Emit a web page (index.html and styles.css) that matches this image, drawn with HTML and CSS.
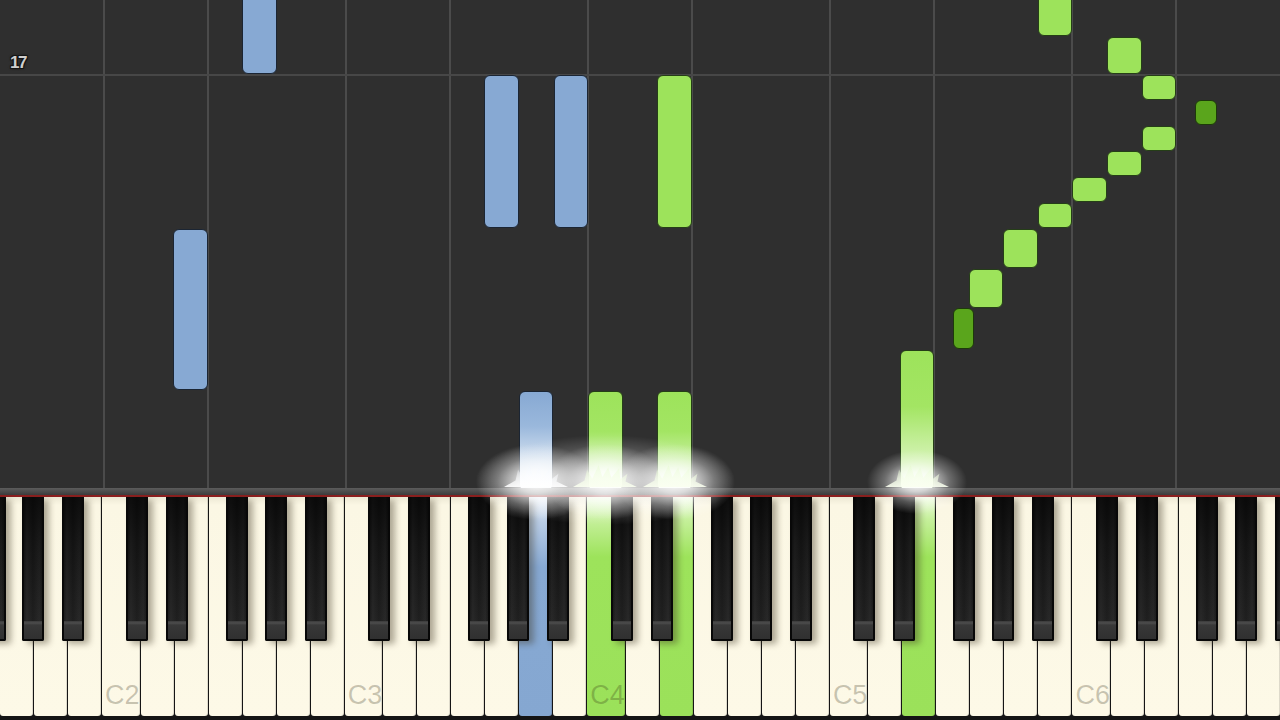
FILE: index.html
```html
<!DOCTYPE html>
<html>
<head>
<meta charset="utf-8">
<title>Piano roll</title>
<link rel="stylesheet" href="styles.css">
</head>
<body>
<div class="app">
  <div class="roll">
    <div class="vline" style="left:102.8px"></div>
    <div class="vline" style="left:206.6px"></div>
    <div class="vline" style="left:345px"></div>
    <div class="vline" style="left:448.7px"></div>
    <div class="vline" style="left:587.1px"></div>
    <div class="vline" style="left:690.9px"></div>
    <div class="vline" style="left:829.3px"></div>
    <div class="vline" style="left:933px"></div>
    <div class="vline" style="left:1071.4px"></div>
    <div class="vline" style="left:1175.2px"></div>
    <div class="measure"></div>
    <span class="measure-num">17</span>

    <div class="note lh" style="left:242.2px;top:-10px;height:83.5px"></div>
    <div class="note lh" style="left:173px;top:229px;height:161px"></div>
    <div class="note lh" style="left:484.3px;top:75px;height:153px"></div>
    <div class="note lh" style="left:553.5px;top:75px;height:153px"></div>
    <div class="note rh" style="left:657.3px;top:75px;height:153px"></div>

    <div class="note lh on" style="left:518.9px;top:391px;height:100px"></div>
    <div class="note rh on" style="left:588.1px;top:391px;height:100px"></div>
    <div class="note rh on" style="left:657.3px;top:391px;height:100px"></div>
    <div class="note rh on" style="left:899.5px;top:350px;height:141px"></div>

    <div class="note rh blk" style="left:952.7px;top:308px;height:41px"></div>
    <div class="note rh" style="left:968.6px;top:269px;height:39px"></div>
    <div class="note rh" style="left:1003.2px;top:229px;height:39px"></div>
    <div class="note rh" style="left:1037.8px;top:203px;height:25px"></div>
    <div class="note rh" style="left:1072.4px;top:177px;height:25px"></div>
    <div class="note rh" style="left:1107px;top:151px;height:25px"></div>
    <div class="note rh" style="left:1141.6px;top:125.5px;height:25px"></div>
    <div class="note rh blk" style="left:1195px;top:99.5px;height:25.5px"></div>
    <div class="note rh" style="left:1141.6px;top:75px;height:24.5px"></div>
    <div class="note rh" style="left:1107px;top:37px;height:37px"></div>
    <div class="note rh" style="left:1037.8px;top:-10px;height:46px"></div>
  </div>

  <div class="rail"></div>

  <div class="keyboard">
    <div class="wk"><span class="bk edge"></span><span class="bk gs"></span></div>
    <div class="wk"><span class="bk as"></span></div>
    <div class="wk"></div>
    <div class="wk"><span class="label">C2</span><span class="bk cs"></span></div>
    <div class="wk"><span class="bk ds"></span></div>
    <div class="wk"></div>
    <div class="wk"><span class="bk fs"></span></div>
    <div class="wk"><span class="bk gs"></span></div>
    <div class="wk"><span class="bk as"></span></div>
    <div class="wk"></div>
    <div class="wk"><span class="label">C3</span><span class="bk cs"></span></div>
    <div class="wk"><span class="bk ds"></span></div>
    <div class="wk"></div>
    <div class="wk"><span class="bk fs"></span></div>
    <div class="wk"><span class="bk gs"></span></div>
    <div class="wk lh-on"><span class="bk as"></span></div>
    <div class="wk"></div>
    <div class="wk rh-on"><span class="label">C4</span><span class="bk cs"></span></div>
    <div class="wk"><span class="bk ds"></span></div>
    <div class="wk rh-on"></div>
    <div class="wk"><span class="bk fs"></span></div>
    <div class="wk"><span class="bk gs"></span></div>
    <div class="wk"><span class="bk as"></span></div>
    <div class="wk"></div>
    <div class="wk"><span class="label">C5</span><span class="bk cs"></span></div>
    <div class="wk"><span class="bk ds"></span></div>
    <div class="wk rh-on"></div>
    <div class="wk"><span class="bk fs"></span></div>
    <div class="wk"><span class="bk gs"></span></div>
    <div class="wk"><span class="bk as"></span></div>
    <div class="wk"></div>
    <div class="wk"><span class="label">C6</span><span class="bk cs"></span></div>
    <div class="wk"><span class="bk ds"></span></div>
    <div class="wk"></div>
    <div class="wk"><span class="bk fs"></span></div>
    <div class="wk"><span class="bk gs"></span></div>
    <div class="wk"><span class="bk as"></span></div>
  </div>

  <div class="glow big" style="left:605px;top:480px"></div>
  <div class="glow" style="left:536px;top:482px"></div>
  <div class="glow" style="left:605px;top:482px"></div>
  <div class="glow" style="left:675px;top:482px"></div>
  <div class="glow small" style="left:917px;top:482px"></div>
  <div class="spark lh-spark" style="left:536px;top:476px"></div>
  <div class="spark rh-spark" style="left:605px;top:476px"></div>
  <div class="spark rh-spark" style="left:675px;top:476px"></div>
  <div class="spark rh-spark" style="left:917px;top:476px"></div>
</div>
</body>
</html>
```

FILE: styles.css
```css
html, body {
  margin: 0;
  padding: 0;
  background: #2f2f2f;
  overflow: hidden;
}

.app {
  position: relative;
  width: 1280px;
  height: 720px;
  display: flex;
  flex-direction: column;
  font-family: "Liberation Sans", Arial, sans-serif;
}

.roll {
  position: relative;
  height: 488px;
  flex: none;
  background: #2f2f2f;
  overflow: hidden;
}

.vline {
  position: absolute;
  top: 0;
  bottom: 0;
  width: 2px;
  background: #4b4b4b;
}

.measure {
  position: absolute;
  left: 0;
  right: 0;
  top: 74px;
  height: 2px;
  background: #474747;
}

.measure-num {
  position: absolute;
  left: 10px;
  top: 53px;
  font-size: 17px;
  font-weight: bold;
  color: #cfcfcf;
  letter-spacing: -1.5px;
  text-shadow: -1px -1px 0 #151515, 1px -1px 0 #151515, -1px 1px 0 #151515, 1px 1px 0 #151515, 0 0 3px #000;
}

.note {
  position: absolute;
  box-sizing: border-box;
  width: 34.6px;
  border-radius: 6px;
  border: 1.5px solid #1d2735;
}

.note.lh {
  background: #87a9d3;
  border-color: #1b2533;
}

.note.rh {
  background: #9de35b;
  border-color: #253e17;
}

.note.blk {
  width: 21.7px;
}

.note.rh.blk {
  background: #5aa51c;
  border-color: #1d3a0a;
}

.note.lh.on {
  background: linear-gradient(to bottom, #87a9d3 0%, #9ab8dc 35%, #d5e2f0 70%, #f4f8fc 100%);
}

.note.rh.on {
  background: linear-gradient(to bottom, #9de35b 0%, #a3e563 40%, #d4f3b4 78%, #f2fce6 100%);
}

.rail {
  height: 7px;
  flex: none;
  background: linear-gradient(to bottom, #5c5c5c 0%, #4c4c4c 50%, #3c3c3c 100%);
  border-bottom: 2px solid #8c1f1f;
}

.keyboard {
  flex: none;
  height: 223px;
  box-sizing: border-box;
  padding-bottom: 4px;
  display: flex;
  background: #151515;
  position: relative;
}

.wk {
  position: relative;
  flex: 1 1 0;
  margin-right: 1px;
  height: 219px;
  box-sizing: border-box;
  border-radius: 0 0 3px 3px;
  background: linear-gradient(to bottom, #ece8d4 0px, #fbf7e4 8px, #fdf9e7 100%);
  box-shadow: inset -1px 0 0 rgba(0, 0, 0, 0.12);
  display: flex;
  align-items: flex-end;
  padding: 0 0 7px 3px;
}

.wk:last-child {
  margin-right: 0;
}

.wk.lh-on {
  background: linear-gradient(to bottom, #e8eff8 0px, #b9cde6 25px, #87a9d3 70px, #85a7d1 100%);
}

.wk.rh-on {
  background: linear-gradient(to bottom, #eefbe0 0px, #c6f09c 22px, #9de35b 60px, #9be15a 100%);
}

.label {
  font-family: "Liberation Sans Narrow", "Liberation Sans", sans-serif;
  font-size: 27px;
  line-height: 1;
  color: rgba(40, 35, 10, 0.25);
}

.bk {
  position: absolute;
  top: 0;
  width: 22px;
  height: 144px;
  box-sizing: border-box;
  z-index: 2;
  border: 2px solid #080808;
  border-top: 0;
  border-radius: 0 0 2px 2px;
  background: linear-gradient(to right, #141414 0%, #202020 15%, #161616 50%, #202020 85%, #141414 100%);
  box-shadow: 5px 3px 6px rgba(60, 50, 30, 0.4);
}

.bk::before {
  content: "";
  position: absolute;
  left: 0;
  right: 0;
  top: 0;
  height: 124px;
  background: linear-gradient(to bottom, rgba(0,0,0,0.6) 0%, rgba(0,0,0,0.15) 40%, rgba(255,255,255,0.04) 100%);
}

.bk::after {
  content: "";
  position: absolute;
  left: 0;
  right: 0;
  bottom: 0;
  height: 18px;
  background: linear-gradient(to bottom, #3a3a3a 0px, #4d4d4d 2px, #383838 4px, #303030 100%);
}

.bk.cs { left: calc(100% - 14px); }
.bk.ds { left: calc(100% - 8px); }
.bk.fs { left: calc(100% - 16px); }
.bk.gs { left: calc(100% - 11px); }
.bk.as { left: calc(100% - 5px); }
.bk.edge { left: -16.5px; }

.glow {
  position: absolute;
  width: 120px;
  height: 76px;
  transform: translate(-50%, -50%);
  z-index: 5;
  pointer-events: none;
  background: radial-gradient(ellipse closest-side, rgba(255,255,255,0.98) 0%, rgba(255,255,255,0.75) 30%, rgba(255,255,255,0.3) 65%, rgba(255,255,255,0) 100%);
}

.glow.small {
  width: 100px;
  height: 64px;
}

.glow.big {
  width: 260px;
  height: 90px;
  background: radial-gradient(ellipse closest-side, rgba(255,255,255,0.5) 0%, rgba(255,255,255,0.28) 50%, rgba(255,255,255,0) 100%);
}

.spark {
  position: absolute;
  width: 64px;
  height: 22px;
  transform: translate(-50%, -50%);
  z-index: 6;
  pointer-events: none;
  clip-path: polygon(0% 100%, 18% 70%, 22% 20%, 30% 62%, 40% 0%, 46% 55%, 55% 10%, 60% 58%, 72% 15%, 74% 65%, 85% 40%, 82% 75%, 100% 100%);
}

.spark.lh-spark {
  background: linear-gradient(to bottom, rgba(230, 240, 255, 0.2), rgba(255, 255, 255, 0.9));
}

.spark.rh-spark {
  background: linear-gradient(to bottom, rgba(220, 250, 190, 0.3), rgba(250, 255, 240, 0.9));
}
```
